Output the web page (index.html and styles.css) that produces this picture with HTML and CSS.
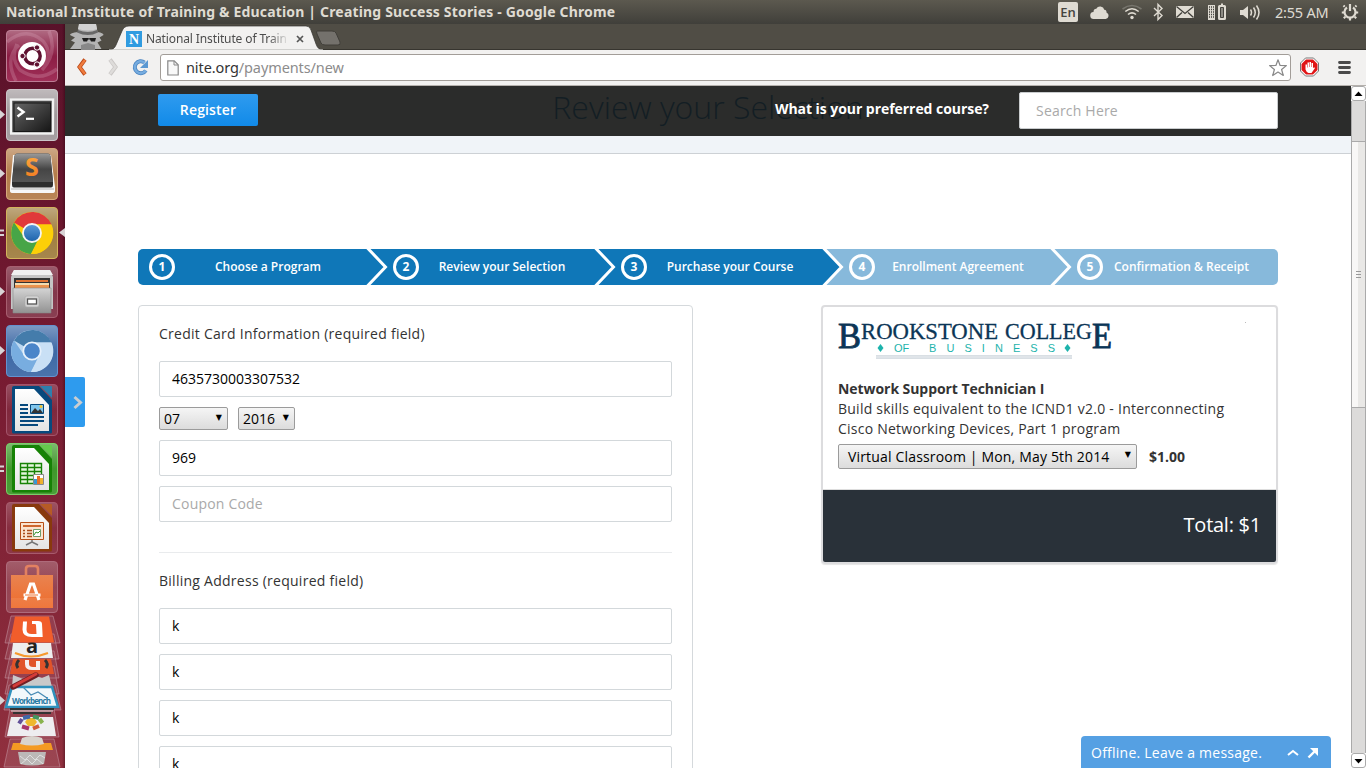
FILE: index.html
```html
<!DOCTYPE html>
<html lang="en">
<head>
<meta charset="utf-8">
<title>National Institute of Training &amp; Education | Creating Success Stories</title>
<link rel="stylesheet" href="styles.css">
</head>
<body>
<svg width="0" height="0" class="defs" aria-hidden="true">
  <defs>
    <linearGradient id="sheen" x1="0" y1="0" x2="0" y2="1"><stop offset="0" stop-color="#fff" stop-opacity=".38"/><stop offset=".5" stop-color="#fff" stop-opacity=".08"/><stop offset="1" stop-color="#fff" stop-opacity=".14"/></linearGradient>
    <linearGradient id="dark" x1="0" y1="0" x2="1" y2="1"><stop offset="0" stop-color="#666"/><stop offset="1" stop-color="#161616"/></linearGradient>
    <linearGradient id="key" x1="0" y1="0" x2="0" y2="1"><stop offset="0" stop-color="#9a9a9a"/><stop offset=".55" stop-color="#454545"/><stop offset="1" stop-color="#555"/></linearGradient>
    <linearGradient id="steel" x1="0" y1="0" x2="0" y2="1"><stop offset="0" stop-color="#d4d4d4"/><stop offset="1" stop-color="#929292"/></linearGradient>
    <linearGradient id="paper" x1="0" y1="0" x2="0" y2="1"><stop offset="0" stop-color="#fff"/><stop offset="1" stop-color="#e4e4e4"/></linearGradient>
    <linearGradient id="flame" x1="0" y1="0" x2="0" y2="1"><stop offset="0" stop-color="#ffb347"/><stop offset="1" stop-color="#f0741c"/></linearGradient>
    <linearGradient id="bag" x1="0" y1="0" x2="0" y2="1"><stop offset="0" stop-color="#e98350"/><stop offset="1" stop-color="#ee6c2c"/></linearGradient>
    <linearGradient id="iris" x1="0" y1="0" x2="0" y2="1"><stop offset="0" stop-color="#5d9bd8"/><stop offset="1" stop-color="#1b62aa"/></linearGradient>
    <linearGradient id="plum" x1="0" y1="0" x2="0" y2="1"><stop offset="0" stop-color="#b06a82"/><stop offset=".5" stop-color="#8b1d44"/><stop offset="1" stop-color="#a03058"/></linearGradient>
  </defs>
</svg>

<header class="panel">
  <span class="panel-title">National Institute of Training &amp; Education | Creating Success Stories - Google Chrome</span>
  <div class="tray">
    <span class="lang">En</span>
    <svg class="tray-icons" width="176" height="24" viewBox="1086 0 176 24">
      <g fill="#dfdbd2">
        <path d="M1094 19a3.500 3.500 0 0 1-.5-7c0-2.300 1.300-3.300 2.800-3.200a4.300 4.300 0 0 1 8 1c2 .2 2.300 1.500 2.200 2.700a3.400 3.400 0 0 1-.8 6.500z"/>
        <circle cx="1132" cy="17.500" r="1.700"/>
        <path d="M1176 6h18v12h-18z"/>
        <path d="M1208 5h7v15h-7z"/>
        <path d="M1219.500 5h1.500V3.500h2V5h1.500q1.500 0 1.500 1.500v12q0 1.500-1.500 1.500h-5q-1.500 0-1.500-1.500v-12q0-1.500 1.500-1.500z"/>
        <path d="M1240 10h3l5-4v13l-5-4h-3z"/>
      </g>
      <g fill="none" stroke="#dfdbd2" stroke-width="1.600">
        <path d="M1128 14.500q4-3.300 8 0M1125.300 11.500q6.700-5.500 13.400 0"/>
        <path d="M1122.500 9q9.500-7 19 0" stroke="#77756d"/>
        <path d="M1154 8l8 7.500-4 4V4.500l4 4-8 7.500" stroke-width="1.400"/>
        <path d="M1250.500 9.500q2 3 0 6M1253.500 7.500q3.500 5 0 10M1256.500 5.500q5 7 0 14" stroke-width="1.500"/>
      </g>
      <path d="M1176.500 6.500l8.500 7 8.500-7M1176.500 17.500l5.500-5M1193.500 17.500l-5.500-5" fill="none" stroke="#3f3e39" stroke-width="1.300"/>
      <path d="M1209 7h5M1209 9.500h5M1209 12h5M1209 14.500h5M1209 17h5" stroke="#45443f" stroke-width="1.300" stroke-dasharray="1 1"/>
      <path d="M1220.500 7.500h3v10h-3z" fill="#8d8b84" stroke="#45443f"/>
    </svg>
    <span class="clock">2:55 AM</span>
    <svg class="power" width="18" height="18" viewBox="0 0 18 18" fill="none" stroke="#dfdbd2"><path d="M6 4.500a5.500 5.500 0 1 0 6 0M9 1v7" stroke-width="2.200"/><path d="M3.700 3.700L2.500 2.500M14.300 3.700l1.200-1.200M3 9.500H.8M15 9.500h2.200M4.300 13.800l-1.500 1.500M13.700 13.800l1.500 1.500M9 15v2.500" stroke-width="2.200"/></svg>
  </div>
</header>

<div class="desktop">
<aside class="launcher">
  <div class="tiles">
  <svg class="tile" viewBox="0 0 65 52"><rect x="6.500" y=".5" width="51" height="51" rx="3.500" fill="url(#plum)" stroke="#bd7d94"/><g fill="none" stroke="#e5b5c8" stroke-opacity=".25" stroke-width="3.500"><path d="M7 12Q26-4 43 11q10 12 1 25M57 39q-18 14-37 1-10-12-3-26M16 51q-12-23 3-36M49 1q9 22-7 39"/></g><circle cx="32" cy="26" r="14" fill="#fff"/><circle cx="32.500" cy="26" r="7.700" fill="none" stroke="#5e1130" stroke-width="3.400"/><g fill="#5e1130" stroke="#fff" stroke-width="1"><circle cx="22.500" cy="26" r="2.700"/><circle cx="37" cy="17.500" r="2.700"/><circle cx="37" cy="34.500" r="2.700"/></g></svg>

  <svg class="tile" viewBox="0 0 65 52"><rect x="6.500" y=".5" width="51" height="51" rx="3.500" fill="#989093"/><rect x="6.500" y=".5" width="51" height="51" rx="3.500" fill="url(#sheen)" stroke="#cbc5c8"/><path d="M10 9h44l1 37H9z" fill="#8a8587"/><rect x="11" y="10.500" width="42" height="34" fill="#4a4a4a" stroke="#f2f2f2" stroke-width="2.500"/><rect x="14" y="14" width="36.500" height="28.500" fill="url(#dark)" stroke="#171717"/><path d="M17.500 18.500l6 4.500-6 4.500" fill="none" stroke="#fff" stroke-width="2.500"/><path d="M26 29.800h8" stroke="#fff" stroke-width="2.200"/><path d="M0 21l5 4.500L0 30z" fill="#d8d4d6"/></svg>

  <svg class="tile" viewBox="0 0 65 52"><rect x="6.500" y=".5" width="51" height="51" rx="3.500" fill="#ad713b"/><rect x="6.500" y=".5" width="51" height="51" rx="3.500" fill="url(#sheen)" stroke="#d6a87b"/><path d="M13 7h38l4 32v4q0 2-3 2H13q-3 0-3-2v-4z" fill="#f7f7f7"/><path d="M11 41h43" stroke="#b5b5b5"/><path d="M17 5.500h31q2 0 2.500 2.500L53 34v3q0 2.500-2 2.500H14q-2 0-2-2.500v-3L14.500 8q.4-2.500 2.500-2.500z" fill="#2e2e2e"/><path d="M17 5.500h31q2 0 2.500 2.500L53 34H12l2.500-26q.4-2.500 2.500-2.500z" fill="url(#key)"/><text x="32" y="28" class="keycap">S</text><path d="M0 21l5 4.500L0 30z" fill="#d8d4d6"/></svg>

  <svg class="tile" viewBox="0 0 65 52"><rect x="6.500" y=".5" width="51" height="51" rx="3.500" fill="#987330"/><rect x="6.500" y=".5" width="51" height="51" rx="3.500" fill="url(#sheen)" stroke="#d3b35c"/><circle cx="32" cy="26" r="21" fill="#fccf08"/><path d="M32 26L14 15.500A21 21 0 0 1 51.500 17.500H32z" fill="#e0393a"/><path d="M14 15.500A21 21 0 0 0 31 47l9-16-8-5-8 4z" fill="#47a547"/><path d="M31 47a21 21 0 0 0 20.500-29.500H32l9 9z" fill="#fccf08"/><circle cx="32" cy="26" r="9" fill="url(#iris)" stroke="#f4f4f4" stroke-width="1.800"/><path d="M0 22.500h4v2H0zM0 27h4v2H0zM65 21v9l-6-4.500z" fill="#d8d4d6"/></svg>

  <svg class="tile" viewBox="0 0 65 52"><rect x="6.500" y=".5" width="51" height="51" rx="3.500" fill="#fff" fill-opacity=".09" stroke="#a75e70"/><rect x="7" y="1" width="50" height="50" rx="3" fill="url(#sheen)" opacity=".6"/><path d="M14 4h36l3 7v32H11V11z" fill="#c5c5c5"/><path d="M14 4h36l3 5H11z" fill="#f0f0f0"/><path d="M14 12h36v10H14z" fill="#333"/><path d="M16 14h32v2H16z" fill="#e07332"/><path d="M15 17h34v2H15z" fill="#f2ddb1"/><path d="M15 19h34v3H15z" fill="#ec934d"/><path d="M13 22h38v25H13z" fill="url(#steel)" stroke="#888" stroke-width=".6"/><rect x="25" y="30" width="14" height="11" rx="2" fill="#d3d3d3" stroke="#aaa" stroke-width=".6"/><rect x="27.500" y="33" width="9" height="5" fill="#fff" stroke="#555" stroke-width="1.300"/><path d="M0 21l5 4.500L0 30z" fill="#d8d4d6"/></svg>

  <svg class="tile" viewBox="0 0 65 52"><rect x="6.500" y=".5" width="51" height="51" rx="3.500" fill="#2d5c9e"/><rect x="6.500" y=".5" width="51" height="51" rx="3.500" fill="url(#sheen)" stroke="#6492cf"/><circle cx="32" cy="26" r="21" fill="#bcd8f1"/><path d="M32 26L14 15.500A21 21 0 0 1 51.500 17.500H32z" fill="#447cab"/><path d="M14 15.500A21 21 0 0 0 31 47l9-16-8-5-8 4z" fill="#78ade0"/><path d="M31 47a21 21 0 0 0 20.500-29.500H32l9 9z" fill="#c9e0f5"/><circle cx="32" cy="26" r="8.700" fill="#4a85c9" stroke="#e7f1fb" stroke-width="1.800"/><path d="M0 21l5 4.500L0 30z" fill="#d8d4d6"/></svg>

  <svg class="tile" viewBox="0 0 65 52"><rect x="6.500" y=".5" width="51" height="51" rx="3.500" fill="url(#sheen)" fill-opacity=".6" stroke="#a3546b"/><path d="M14 2h25l13 14v32q0 1.500-1.500 1.500h-37Q12 49.500 12 48V4q0-2 2-2z" fill="#07497d"/><path d="M40 2h11q1 0 1 1v11z" fill="#2d7fae"/><path d="M15 5h19l15 16v26H15z" fill="url(#paper)"/><path d="M20 21h8M20 25h8M20 29h8M20 33h24M20 37h24M20 41h18" stroke="#07497d" stroke-width="2"/><path d="M30.500 20.500h13v9h-13z" fill="#80c6ed" stroke="#07497d"/><path d="M31 29l4-5 3 3 2-2 3 4z" fill="#333"/><circle cx="41" cy="22.500" r="1.500" fill="#f5c331"/></svg>

  <svg class="tile" viewBox="0 0 65 52"><rect x="6.500" y=".5" width="51" height="51" rx="3.500" fill="#2f8e19"/><rect x="6.500" y=".5" width="51" height="51" rx="3.500" fill="url(#sheen)" stroke="#79cf68"/><path d="M14 2h25l13 14v32q0 1.500-1.500 1.500h-37Q12 49.500 12 48V4q0-2 2-2z" fill="#168205"/><path d="M40 2h11q1 0 1 1v11z" fill="#64ca4b"/><path d="M15 5h19l15 16v26H15z" fill="url(#paper)"/><path d="M20.500 20.500h21v20h-21z" fill="#e4f5dc"/><path d="M20.500 20.500h21v20h-21zM20 24.500h22M20 28.500h22M20 32.500h22M20 36.500h22M27.500 20v21M34.500 20v21" fill="none" stroke="#168205" stroke-width="1.400"/><path d="M33.500 31.500h10v10h-10z" fill="#fff" stroke="#888"/><path d="M34 36h3v5h-3z" fill="#3699d5"/><path d="M37 33h3v8h-3z" fill="#e76e28"/><path d="M40 35h3v6h-3z" fill="#eeb22c"/><path d="M0 22.500h4v2H0zM0 27h4v2H0z" fill="#d8d4d6"/></svg>

  <svg class="tile" viewBox="0 0 65 52"><rect x="6.500" y=".5" width="51" height="51" rx="3.500" fill="url(#sheen)" fill-opacity=".6" stroke="#a85a6c"/><path d="M14 2h25l13 14v32q0 1.500-1.500 1.500h-37Q12 49.500 12 48V4q0-2 2-2z" fill="#88390d"/><path d="M40 2h11q1 0 1 1v11z" fill="#b65b25"/><path d="M15 5h19l15 16v26H15z" fill="url(#paper)"/><path d="M20.500 20.500h23v17h-23z" fill="#fbe4cf" stroke="#b74f18"/><path d="M23 24h18" stroke="#cd672e" stroke-width="2"/><path d="M23 28.500h2M23 31.500h2M23 34.500h2M27 28.500h5M27 31.500h5M27 34.500h5" stroke="#a84d1c" stroke-width="1.500"/><path d="M33.500 27.500h7v7h-7z" fill="#fff" stroke="#6e9c6c"/><path d="M34 33l2-3 2 1 2-2" fill="none" stroke="#35972d"/><path d="M32 38v2l-6 3M32 40l6 3" stroke="#777" stroke-width="1.500" fill="none"/></svg>

  <svg class="tile" viewBox="0 0 65 52"><rect x="6.500" y=".5" width="51" height="51" rx="3.500" fill="#fff" fill-opacity=".1" stroke="#ae6b7b"/><rect x="7" y="1" width="50" height="50" rx="3" fill="url(#sheen)" opacity=".45"/><path d="M26 17V8q0-3 3-3h6q3 0 3 3v9" fill="none" stroke="#e38161" stroke-width="2.600"/><path d="M11 14h42v33H11z" fill="url(#bag)"/><path d="M11 37h42v10H11z" fill="#fff" opacity=".08"/><path d="M25 39l5.500-16h3L39 39M23.500 34h17" fill="none" stroke="#fff" stroke-width="3.200"/><path d="M25 34h13" stroke="#ee7535"/></svg>

  <svg class="stack" viewBox="0 615 65 153"><g fill="#fff" fill-opacity=".1" stroke="#c798a4" stroke-opacity=".55"><path d="M11 616h42l7 27H5zM11 634h43l5 25H5zM11 651h43l5 27H5zM11 666h43l5 28H5zM9 685h46l6 25H4zM10 709h44l5 28H5zM10 739h44l6 28H4z"/></g>
    <path d="M13 643h38l2 15H11z" fill="#eee"/><text x="32" y="653" class="shop">a</text><path d="M15 653q16 7 33 0" fill="none" stroke="#f6992d" stroke-width="2"/>
    <path d="M15 616.500h34l5 26H10z" fill="#f15d2b"/><path d="M23 621.500h4l-.5 8q0 4.500 5 4.500h5l-.5-9q-.1-1-1-1h-3v-3h6q4 0 4 3l.7 13H32q-9.500 0-9.500-7.500z" fill="#fff"/>
    <path d="M13 659h38l3 15H10z" fill="#e15329"/><path d="M19 660q-4 4-1 8M45 660q4 4 1 8" fill="none" stroke="#333" stroke-width="3"/><path d="M25 660h4v4q0 3 4 3h3v-6h4v9h-8q-7 0-7-6z" fill="#f5eeee"/>
    <path d="M13 675l10 4 10-4 9 3 7-3 3 12H12z" fill="#c9c9c9"/>
    <path d="M12 687h40l6 20H6z" fill="#f2f8fb" stroke="#2f91bd" stroke-width="2.500"/><path d="M23 687l8 8 7-3 9 6" fill="none" stroke="#468bb5" stroke-width="1.200"/><path d="M13 687l23-12" stroke="#701e24" stroke-width="5.500" stroke-linecap="round"/><path d="M14 686l22-12" stroke="#d33b38" stroke-width="3" stroke-linecap="round"/><text x="12" y="704" class="bench" textLength="39">Workbench</text>
    <path d="M10 709h44M13 713h38" stroke="#333" stroke-width="2"/><path d="M11 711h42" stroke="#ddd"/>
    <path d="M11 717h42l3 19H7z" fill="#eeedf0"/><path d="M28 718h6l3 4-3 4h-6l-3-4z" fill="#efb82e"/><g stroke-width="4" fill="none"><path d="M23 718l7-1.500" stroke="#3f67a7"/><path d="M33 716.500l6 1.500" stroke="#45955d"/><path d="M39.500 719l3 4" stroke="#89b34e"/><path d="M33 728.500l6-2.500" stroke="#d05b3a"/><path d="M22 726.500l7 2" stroke="#a9356c"/><path d="M19 723.500l3-4.500" stroke="#625099"/></g>
    <path d="M13 743h38l2 7H11z" fill="#f49a23"/><path d="M22 738q10-4 20 0l2 6q-12 3-24 0z" fill="#d9d4ce"/><path d="M18 752h28l-2 12q-12 3-24 0z" fill="#bcb8b7"/><path d="M20 756l5 4 5-5 5 5 5-5 5 3M21 764l6-5 5 5 5-5 6 5" fill="none" stroke="#dfdfdf"/><path d="M0 696l5 4.500-5 4.500z" fill="#d8d4d6"/></svg>
  </div>
</aside>

<section class="browser">
  <div class="tabstrip">
    <svg class="tabs-art" width="290" height="26" viewBox="65 24 290 26">
      <path d="M79 24h17l1.500 8q6 1 6 3l-4 2.500 2 3-4 2 4 6.500H70l5-6.500-4-2 4-3-5-2.500q0-2 8-3z" fill="#b4b4b4"/><path d="M79 24h17l1 5q-8 3-19 0z" fill="#d2d2d2"/><path d="M78 30q10 4 19 0l1 2.500q-10 5-21 0z" fill="#686868"/><path d="M82 38h6.500l.5 1 .5-1H96l-1 3.500h-4l-1-2h-2l-1 2h-3.500z" fill="#1d1d1d"/><path d="M81 45l7-2 7 2v5H81z" fill="#888"/>
      <path d="M109 50q5 0 7-5l6-14q2-5 7-5h177q4 0 5 4l5 14q2 6 7 6z" fill="#f2f1f0" stroke="#33322e" stroke-width=".7"/>
      <path d="M109 49.500h214v1H109z" fill="#f2f1f0"/>
      <path d="M317 31h15q3 0 4 2l4 9q1 3-2 3h-13q-3 0-4-2l-4-9q-1-3 0-3z" fill="#74716c" stroke="#403e39"/>
      <path d="M126 31h16v16h-16z" fill="#309be0"/><text x="134" y="43.500" class="favicon">N</text>
      <path d="M297 36l6 6M303 36l-6 6" stroke="#555" stroke-width="1.700"/>
    </svg>
    <span class="tab-title">National Institute of Train</span>
  </div>
  <div class="toolbar">
    <svg class="nav-icons" width="95" height="35" viewBox="65 50 95 35" fill="none"><path d="M85 59.500l-5.500 7.500 5.500 7.500" stroke="#b94818" stroke-width="4"/><path d="M85 60l-5.500 7 5.500 7" stroke="#ef7b3d" stroke-width="2.500"/><path d="M110 59.500l5.500 7.500-5.500 7.500" stroke="#c9c6c4" stroke-width="4"/><path d="M110 60l5.500 7-5.500 7" stroke="#dedcda" stroke-width="2.500"/><path d="M144.500 62.500a6 6 0 1 0 1.300 8" stroke="#4a84c1" stroke-width="4"/><path d="M144.500 62.500a6 6 0 1 0 1.300 8" stroke="#76acdf" stroke-width="2.400"/><path d="M148 60v8h-8z" fill="#5b98d2"/></svg>
    <div class="omnibox">
      <svg width="12" height="16" viewBox="0 0 12 16"><path d="M.8.800h6.400l4 4V15H.8z" fill="#f8f8f8" stroke="#888" stroke-width="1.200"/><path d="M7 1v4h4" fill="none" stroke="#888"/></svg>
      <span class="url"><b>nite.org</b>/payments/new</span>
      <svg class="star" width="20" height="20" viewBox="0 0 20 20"><path d="M10 1.800l2.100 5.700 6.300.1-4.800 3.900 1.700 6-5.300-3.500-5.300 3.500 1.700-6-4.800-3.900 6.300-.1z" fill="#fff" stroke="#888" stroke-width="1.200" stroke-linejoin="round"/></svg>
    </div>
    <svg class="ext" width="66" height="35" viewBox="1300 50 66 35"><path d="M1306 58h7.500l5 5v8l-5 5h-8l-5-5v-8l5-5z" fill="#fff" stroke="#777"/><path d="M1306.500 59.500h6.500l4.500 4.500v6l-4.500 4.500h-7l-4.500-4.500v-6l4.500-4.500z" fill="#e01516"/><path d="M1305.500 64.500v5q1 3 3 3.500h3l3.500-5-1-.7-1 1V63h-1.500v4h-.5v-5h-1.500v5h-.5v-4.500h-1.500v5h-.5v-3z" fill="#fff"/><path d="M1339.500 62.500h10M1339.500 67.500h10M1339.500 72.500h10" stroke="#4a4a4a" stroke-width="2.800" stroke-linecap="round"/></svg>
  </div>
  <div class="viewport">
    <main class="page">
      <div class="hero"><h1>Review your Selection</h1></div>
      <nav class="topnav">
        <a class="register">Register</a>
        <span class="question">What is your preferred course?</span>
        <div class="search">Search Here</div>
      </nav>
      <div class="side-tab"><svg width="20" height="50" viewBox="0 0 20 50"><path d="M9.500 20l6 5.500-6 5.500" fill="none" stroke="#c9cdd1" stroke-width="3"/></svg></div>
      <div class="container">
        <ol class="steps">
          <li class="step done first"><span class="num">1</span><span class="label">Choose a Program</span><svg class="chev" viewBox="0 0 24 36"><path d="M0 0h2l17 18L2 36H0z" class="fill"/><path d="M1-1.500L19.500 18l-18.500 19.500" class="line"/></svg></li>
          <li class="step done"><span class="num">2</span><span class="label">Review your Selection</span><svg class="chev" viewBox="0 0 24 36"><path d="M0 0h2l17 18L2 36H0z" class="fill"/><path d="M1-1.500L19.500 18l-18.500 19.500" class="line"/></svg></li>
          <li class="step done"><span class="num">3</span><span class="label">Purchase your Course</span><svg class="chev" viewBox="0 0 24 36"><path d="M0 0h2l17 18L2 36H0z" class="fill"/><path d="M1-1.500L19.500 18l-18.500 19.500" class="line"/></svg></li>
          <li class="step"><span class="num">4</span><span class="label">Enrollment Agreement</span><svg class="chev" viewBox="0 0 24 36"><path d="M0 0h2l17 18L2 36H0z" class="fill"/><path d="M1-1.500L19.500 18l-18.500 19.500" class="line"/></svg></li>
          <li class="step last"><span class="num">5</span><span class="label">Confirmation &amp; Receipt</span></li>
        </ol>
        <div class="columns">
          <form class="card">
            <p class="legend">Credit Card Information (required field)</p>
            <div class="field">4635730003307532</div>
            <div class="selects">
              <div class="select month">07<i class="caret">▼</i></div>
              <div class="select year">2016<i class="caret">▼</i></div>
            </div>
            <div class="field">969</div>
            <div class="field placeholder">Coupon Code</div>
            <div class="rule"></div>
            <p class="legend">Billing Address (required field)</p>
            <div class="field">k</div>
            <div class="field">k</div>
            <div class="field">k</div>
            <div class="field">k</div>
          </form>
          <aside class="summary">
            <div class="summary-body">
              <svg class="logo" width="436" height="60" viewBox="838 314 436 60">
                <g class="logo-main"><text x="838" y="348" class="big" textLength="23" lengthAdjust="spacingAndGlyphs">B</text><text x="861" y="339" textLength="137" lengthAdjust="spacingAndGlyphs">ROOKSTONE</text><text x="1005" y="339" textLength="87" lengthAdjust="spacingAndGlyphs">COLLEG</text><text x="1092" y="348" class="big" textLength="20" lengthAdjust="spacingAndGlyphs">E</text></g>
                <g class="logo-sub"><text x="894" y="352">OF</text><text x="929" y="352" textLength="126">BUSINESS</text></g>
                <path d="M880.500 344l3 4-3 4-3-4zM1067.500 344l3 4-3 4-3-4z" fill="#1db3ac"/>
                <path d="M876 355h196v4H876z" fill="#d9dfe4"/><path d="M876 357h196" stroke="#e6eaee"/><path d="M1245 322h1v1h-1z" fill="#bbb"/>
              </svg>
              <p class="course"><b>Network Support Technician I</b><br>Build skills equivalent to the ICND1 v2.0 - Interconnecting<br>Cisco Networking Devices, Part 1 program</p>
              <div class="price-row"><div class="select session">Virtual Classroom | Mon, May 5th 2014<i class="caret">▼</i></div><b>$1.00</b></div>
            </div>
            <div class="total">Total: $1</div>
          </aside>
        </div>
      </div>
      <div class="chat"><span>Offline. Leave a message.</span><svg width="40" height="20" viewBox="0 0 40 20" fill="none" stroke="#fff"><path d="M4 12l5-4 5 4" stroke-width="2"/><path d="M24.500 14.500l8-8" stroke-width="2.400"/><path d="M26 5h8v8z" fill="#fff" stroke="none"/></svg></div>
    </main>
    <div class="scrollbar">
      <div class="sb-btn"><svg width="15" height="15" viewBox="0 0 15 15"><path d="M3.500 10L7.500 5.500l4 4.500z"/></svg></div>
      <div class="sb-before"></div>
      <div class="sb-thumb"><svg width="9" height="9" viewBox="0 0 9 9"><path d="M2 1.500h5M2 4.500h5M2 7.500h5" stroke="#999"/></svg></div>
      <div class="sb-after"></div>
      <div class="sb-btn"><svg width="15" height="15" viewBox="0 0 15 15"><path d="M3.500 6L7.500 10.500l4-4.500z"/></svg></div>
    </div>
  </div>
</section>
</div>
</body>
</html>
```

FILE: styles.css
```css
* { box-sizing: border-box; }
body { margin: 0; width: 1366px; height: 768px; overflow: hidden; font: 14px/20px "Open Sans", sans-serif; color: #333; background: #fff; }
svg { display: block; flex: none; }
.defs { position: absolute; }
p, h1, ol { margin: 0; padding: 0; }

/* system panel */
.panel { height: 24px; display: flex; justify-content: space-between; padding-left: 6px; background: linear-gradient(#5c594f, #403f3a); color: #dfdbd2; white-space: nowrap; }
.panel-title { font: bold 14px/24px "Noto Sans", sans-serif; letter-spacing: .17px; }
.tray { display: flex; align-items: center; width: 308px; }
.lang { width: 20px; height: 20px; border-radius: 2px; background: #dfdbd2; color: #45443f; font: 600 13px/20px "Open Sans", sans-serif; text-align: center; margin-right: 8px; }
.clock { font: 14.500px/24px "Noto Sans", sans-serif; letter-spacing: -.2px; width: 66px; padding-left: 13px; }
.tray-icons { width: 176px; }
.power { margin-left: 13px; }

.desktop { display: flex; height: 744px; }

/* launcher */
.launcher { width: 65px; background: linear-gradient(90deg, transparent 62px, rgba(30, 0, 10, .35) 65px), linear-gradient(#59122a, #761a31 45%, #90303e); overflow: hidden; flex: none; }
.tiles { display: flex; flex-direction: column; gap: 7px; padding-top: 6px; }
.tile { width: 65px; height: 52px; }
.stack { width: 65px; height: 153px; margin-top: -5px; }
.keycap { font: bold 25px "Open Sans", sans-serif; fill: url(#flame); text-anchor: middle; }
.shop { font: bold 20px "Open Sans", sans-serif; fill: #222; text-anchor: middle; }
.bench { font: bold 8px "Open Sans", sans-serif; fill: #2877a2; }
.favicon { font: bold 14px "Liberation Serif", serif; fill: #fff; text-anchor: middle; }

/* browser chrome */
.browser { flex: 1; display: flex; flex-direction: column; min-width: 0; }
.tabstrip { height: 26px; background: #504d45; border-bottom: 1px solid #37352f; position: relative; }
.tabs-art { height: 26px; }
.tab-title { position: absolute; left: 81px; top: 5px; width: 143px; overflow: hidden; font: 12px/20px "Noto Sans", sans-serif; letter-spacing: -.12px; color: #4c4c4c; white-space: nowrap; -webkit-mask-image: linear-gradient(90deg, #000 86%, transparent); }
.toolbar { height: 36px; display: flex; background: #f2f1f0; border-bottom: 1px solid #b5b1ad; }
.omnibox { width: 1131px; height: 27px; margin-top: 4px; border: 1px solid #a29d98; border-radius: 3px; background: #fff; display: flex; align-items: center; padding: 0 2px 0 6px; gap: 7px; }
.url { flex: 1; font: 14.500px/24px "Noto Sans", sans-serif; letter-spacing: -.1px; color: #8c8c8c; padding-bottom: 1px; }
.url b { font-weight: 400; color: #333; }
.ext { margin-left: 9px; }

.viewport { flex: 1; display: flex; min-height: 0; }
.page { width: 1286px; height: 682px; position: relative; overflow: hidden; background: #fff; }
.hero { height: 68px; background: #f0f4f8; border-bottom: 1px solid #cdd1d5; text-align: center; }
.hero h1 { font: 300 32px/42px "Open Sans", sans-serif; color: #0066b5; }
.topnav { position: absolute; inset: 0 0 auto 0; height: 50px; background: rgba(21, 22, 20, .9); display: flex; align-items: flex-start; padding: 6px 73px 0 93px; }
.register { width: 100px; height: 32px; margin-top: 2px; border-radius: 2px; background: linear-gradient(#2f9bef, #118ae8); color: #fff; font-weight: 600; letter-spacing: .15px; line-height: 32px; text-align: center; }
.question { margin: 7px 30px 0 auto; color: #fff; font-weight: 700; letter-spacing: -.05px; }
.search { width: 259px; height: 37px; background: #fff; border: 1px solid #c9ccce; border-radius: 2px; padding-left: 16px; line-height: 36px; letter-spacing: .2px; color: #a9a9a9; }
.side-tab { position: absolute; left: 0; top: 291px; width: 20px; height: 50px; background: #2e9bee; border-radius: 0 2px 2px 0; }

.container { width: 1140px; margin: 95px 0 0 73px; }
.steps { display: flex; height: 36px; list-style: none; }
.step { width: 228px; background: #87b9db; display: flex; align-items: center; padding-left: 11px; position: relative; color: #fff; font: 600 12px/34px "Open Sans", sans-serif; }
.step .fill { fill: #87b9db; }
.done { background: #0f77b8; }
.done .fill { fill: #0f77b8; }
.first { border-radius: 5px 0 0 5px; }
.last { border-radius: 0 5px 5px 0; }
.step:not(.first) { padding-left: 27px; }
.num { width: 26px; height: 26px; border: 3px solid #fff; border-radius: 50%; line-height: 19px; text-align: center; font-weight: 700; }
.label { flex: 1; text-align: center; padding-right: 9px; }
.first .label { padding-right: 5px; }
.step.last .label { padding-right: 18px; }
.chev { position: absolute; left: 228px; top: 0; width: 24px; height: 36px; z-index: 1; }
.line { fill: none; stroke: #fff; stroke-width: 3; }

.columns { display: flex; justify-content: space-between; align-items: flex-start; margin-top: 20px; }
.card { width: 555px; height: 520px; border: 1px solid #d5d9dc; border-radius: 4px; padding: 18px 20px; display: flex; flex-direction: column; gap: 10px; }
.legend { height: 27px; flex: none; letter-spacing: .26px; }
.field { height: 36px; flex: none; border: 1px solid #d3d8db; border-radius: 2px; padding-left: 12px; line-height: 34px; color: #000; }
.placeholder { color: #a9a9a9; letter-spacing: .2px; }
.selects { display: flex; gap: 10px; height: 23px; }
.select { border: 1px solid #9b9b9b; border-radius: 2px; background: linear-gradient(#f5f5f5, #dcdcdc); color: #000; display: flex; justify-content: space-between; padding: 0 5px 0 4px; line-height: 22px; }
.caret { font: 8px/20px "DejaVu Sans", sans-serif; }
.month { width: 69px; }
.year { width: 57px; }
.rule { height: 1px; margin: 20px 0 8px; background: #e9ebed; flex: none; }

.summary { width: 457px; height: 259px; border: 2px solid #dcdcde; border-radius: 4px; overflow: hidden; box-shadow: 0 1px 1px #e5e5e5; }
.summary-body { height: 183px; padding: 7px 0 0 15px; border-bottom: 1px solid #ddd; }
.logo-main { font: 23px "Liberation Serif", serif; fill: #0b3556; stroke: #0b3556; stroke-width: .3px; }
.logo-main .big { font-size: 36px; stroke-width: .9px; }
.logo-sub { font: 11px "Liberation Sans", sans-serif; fill: #1db3ac; }
.course { padding-top: 5px; height: 70px; letter-spacing: .24px; }
.course b { letter-spacing: -.06px; }
.price-row { display: flex; align-items: center; gap: 12px; }
.session { width: 299px; height: 25px; padding: 0 5px 0 9px; line-height: 24px; letter-spacing: .17px; }
.total { height: 73px; background: #293139; color: #fff; text-align: right; padding: 0 15px; font-size: 20px; letter-spacing: -.25px; line-height: 69px; }

.chat { position: absolute; left: 1016px; top: 650px; width: 250px; height: 32px; background: #55a0e3; border-radius: 4px 4px 0 0; color: #fff; display: flex; justify-content: space-between; align-items: center; padding: 1px 7px 0 10px; letter-spacing: .24px; }

.scrollbar { width: 15px; display: flex; flex-direction: column; background: #fff; }
.sb-btn { height: 15px; border: 1px solid #aaa; border-radius: 3px; background: #fff; display: flex; justify-content: center; align-items: center; }
.sb-before { height: 40px; background: #dcdbda; border: solid #aaa; border-width: 0 1px; }
.sb-thumb { height: 267px; border: 1px solid #aaa; background: linear-gradient(90deg, #f8f7f6 50%, #e9e8e6 50%); display: flex; align-items: center; justify-content: center; }
.sb-after { flex: 1; background: #dcdbda; border: solid #aaa; border-width: 0 1px; }
```
